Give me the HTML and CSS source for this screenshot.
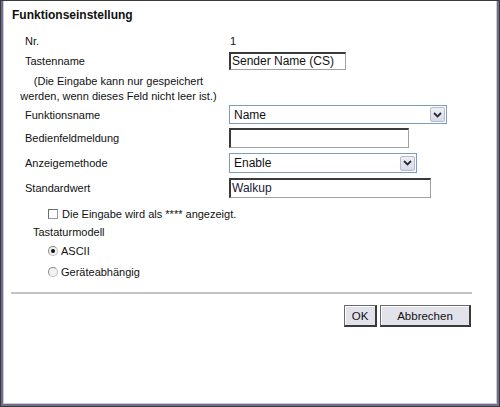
FILE: index.html
```html
<!DOCTYPE html>
<html>
<head>
<meta charset="utf-8">
<link rel="stylesheet" href="styles.css">
</head>
<body>
<div class="frame">
  <div class="frame-mid">
    <div class="frame-in">
      <h1 class="title">Funktionseinstellung</h1>
      <div class="form">
        <div class="row row-nr">
          <span class="label">Nr.</span>
          <span class="value">1</span>
        </div>
        <div class="row row-tn">
          <span class="label">Tastenname</span>
          <div class="textbox tb-sender">Sender Name (CS)</div>
        </div>
        <p class="note">(Die Eingabe kann nur gespeichert<br>werden, wenn dieses Feld nicht leer ist.)</p>
        <div class="row row-fn">
          <span class="label">Funktionsname</span>
          <div class="select sel-name"><span class="sel-text">Name</span><span class="sel-btn"><svg width="9" height="6" viewBox="0 0 9 6"><path d="M1 1 L4.5 4.5 L8 1" fill="none" stroke="#2a2a3a" stroke-width="1.8"/></svg></span></div>
        </div>
        <div class="row row-bm">
          <span class="label">Bedienfeldmeldung</span>
          <div class="textbox tb-bed"></div>
        </div>
        <div class="row row-am">
          <span class="label">Anzeigemethode</span>
          <div class="select sel-enable"><span class="sel-text">Enable</span><span class="sel-btn"><svg width="9" height="6" viewBox="0 0 9 6"><path d="M1 1 L4.5 4.5 L8 1" fill="none" stroke="#2a2a3a" stroke-width="1.8"/></svg></span></div>
        </div>
        <div class="row row-sw">
          <span class="label">Standardwert</span>
          <div class="textbox tb-walk">Walkup</div>
        </div>
      </div>
      <div class="check-line">
        <span class="checkbox"></span>
        <span>Die Eingabe wird als **** angezeigt.</span>
      </div>
      <div class="kb-title">Tastaturmodell</div>
      <div class="radio-line r-ascii">
        <span class="radio checked"></span>
        <span>ASCII</span>
      </div>
      <div class="radio-line r-geraet">
        <span class="radio"></span>
        <span>Geräteabhängig</span>
      </div>
      <div class="footer">
        <div class="rule"></div>
        <div class="buttons">
          <button class="btn btn-ok">OK</button>
          <button class="btn btn-cancel">Abbrechen</button>
        </div>
      </div>
    </div>
  </div>
</div>
</body>
</html>
```
FILE: styles.css
```css
* { box-sizing: border-box; }
html, body { margin: 0; padding: 0; background: #fff; }
body {
  font-family: "Liberation Sans", Arial, sans-serif;
  font-size: 11px;
  color: #111;
}
.frame {
  width: 500px;
  height: 407px;
  border: 1px solid #3a3a3a;
}
.frame-mid {
  height: 100%;
  border: 2px solid #6e6e8c;
  border-top: 0;
}
.frame-in {
  height: 100%;
  border: 1px solid #cbcbd8;
  border-top: 0;
  padding-top: 7px;
}
.title {
  margin: 0 0 0 8px;
  font-size: 12px;
  font-weight: bold;
  line-height: 15px;
  height: 15px;
}
.form {
  margin-top: 8px;
  display: flex;
  flex-direction: column;
}
.row {
  display: grid;
  grid-template-columns: 204px auto;
  align-items: center;
  padding-left: 21px;
}
.row-nr { height: 20px; }
.row-tn { height: 19px; }
.row-fn { height: 19px; margin-top: 2px; }
.row-bm { height: 20px; margin-top: 4px; }
.row-am { height: 20px; margin-top: 5px; }
.row-sw { height: 20px; margin-top: 5px; }
.value { padding-left: 1px; }
.note {
  margin: 4px 0 0 0;
  width: 225px;
  text-align: center;
  line-height: 15px;
  height: 30px;
  padding-left: 4px;
}
.row-fn { margin-top: 1px; }
.textbox {
  height: 18px;
  border: 1px solid #a0a0a0;
  border-top: 2px solid #3a3a3a;
  border-left: 2px solid #3a3a3a;
  padding-left: 1px;
  line-height: 15px;
  font-size: 12px;
  background: #fff;
  white-space: nowrap;
}
.tb-sender { width: 117px; }
.tb-bed { width: 180px; height: 20px; }
.tb-walk { width: 202px; height: 20px; line-height: 17px; color: #1a1a33; }
.select {
  display: flex;
  align-items: center;
  height: 19px;
  border: 1px solid #7f9db9;
  background: #fff;
  padding: 1px 1px 1px 4px;
  font-size: 12px;
}
.sel-name { width: 218px; }
.sel-enable { width: 188px; height: 20px; }
.sel-text { flex: 1; }
.sel-btn {
  width: 15px;
  height: 15px;
  border: 1px solid #b5bccb;
  border-radius: 2px;
  background: linear-gradient(#eef0f6, #d6dae6);
  display: flex;
  align-items: center;
  justify-content: center;
}
.check-line {
  margin-top: 8px;
  height: 15px;
  display: flex;
  align-items: center;
  padding-left: 44px;
}
.checkbox {
  width: 10px;
  height: 10px;
  border: 1px solid #9a9a9a;
  border-top-color: #6a6a6a;
  border-left-color: #6a6a6a;
  margin-right: 4px;
  background: #fff;
}
.kb-title {
  margin-top: 4px;
  height: 15px;
  line-height: 15px;
  padding-left: 29px;
}
.radio-line {
  display: flex;
  align-items: center;
  height: 15px;
  padding-left: 44px;
}
.r-ascii { margin-top: 3px; }
.r-geraet { margin-top: 6px; }
.radio {
  width: 10px;
  height: 10px;
  border-radius: 50%;
  border: 1px solid #c0c0c0;
  border-top-color: #8a8a8a;
  border-left-color: #8a8a8a;
  background: #f2f2f2;
  margin-right: 3px;
  position: relative;
}
.radio.checked::after {
  content: "";
  position: absolute;
  left: 2px;
  top: 2px;
  width: 4px;
  height: 4px;
  border-radius: 50%;
  background: #111;
}
.footer {
  margin-top: 13px;
  padding-left: 7px;
  width: 468px;
}
.rule {
  height: 2px;
  background: #c4c4c4;
}
.buttons {
  margin-top: 11px;
  display: flex;
  justify-content: flex-end;
  gap: 3px;
  padding-right: 1px;
}
.btn {
  font-family: "Liberation Sans", Arial, sans-serif;
  font-size: 11.5px;
  color: #111;
  height: 22px;
  padding: 0;
  background: #e2e2ea;
  border: 1px solid #6a6a6a;
  border-right: 2px solid #3a3a3a;
  border-bottom: 2px solid #3a3a3a;
  box-shadow: inset 1px 1px 0 #fff;
}
.btn-ok { width: 33px; }
.btn-cancel { width: 91px; }
```
